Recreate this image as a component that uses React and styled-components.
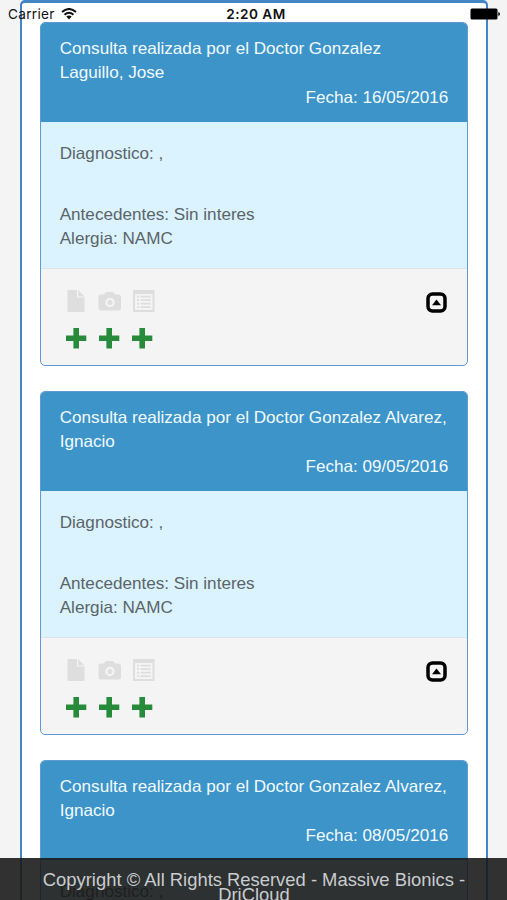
import React from "react";
import styled, { createGlobalStyle } from "styled-components"

const GlobalStyle = createGlobalStyle`
    * {
        box-sizing: border-box;
    }

    body {
        margin: 0;
        background: #f4f4f4;
        font-family: "Liberation Sans", Arial, sans-serif;
    }
`

const Screen = styled.div`
    position: relative;
    height: 900px;
    overflow: hidden;
    padding: 0 19px 0 20px;
`

const StatusBar = styled.div`
    position: absolute;
    top: 6px;
    left: 0;
    right: 0;
    z-index: 2;
    display: grid;
    grid-template-columns: 1fr auto 1fr;
    align-items: center;
    height: 16px;
    padding: 0 7px 0 8px;
    color: #111;
    font-family: Inter, "Liberation Sans", sans-serif;
    font-size: 13.6px;
    line-height: 16px;
`

const Carrier = styled.div`
    display: flex;
    align-items: center;
    gap: 6px;
    letter-spacing: 0.3px;
`

const Clock = styled.div`
    padding-left: 4px;
    font-weight: 600;
    letter-spacing: 0.5px;
`

const Battery = styled.svg`
    justify-self: end;
`

const Panel = styled.div`
    height: 1200px;
    padding: 19px 18px 0;
    border: 2px solid #4286c6;
    border-top-width: 3px;
    border-radius: 5px;
    background: #fff;
`

const Card = styled.div`
    height: 344px;
    margin-bottom: 25px;
    border: 1px solid #609ad3;
    border-radius: 5px;
    overflow: hidden;
    background: #f4f4f4;
    font-size: 17.12px;
    line-height: 24.5px;
`

const CardHeader = styled.div`
    height: 99px;
    padding: 13.6px 18.8px 0 18.7px;
    background: #3c94c9;
    color: #f2fbff;
`

const DateLine = styled.div`
    text-align: right;
`

const CardBody = styled.div`
    height: 147px;
    padding: 19.6px 18.7px 0;
    border-bottom: 1px solid #dde3e6;
    background: #daf3ff;
    color: #5c6468;
`

const Diagnosis = styled.div`
    margin-bottom: 36.5px;
`

const CardFooter = styled.div`
    display: flex;
    justify-content: space-between;
    padding: 21px 20.5px 0 24px;
`

const IconGrid = styled.div`
    display: grid;
    grid-template-columns: repeat(3, 22px);
    column-gap: 11px;
    row-gap: 14.5px;
`

const Icon = styled.svg`
    display: block;
    width: 22px;
    height: 22px;
    overflow: visible;
    color: ${props => props.$color};
`

const Toggle = styled.svg`
    display: block;
    margin-top: 1.7px;
`

const Copyright = styled.div`
    position: absolute;
    left: 0;
    right: 0;
    bottom: 0;
    z-index: 2;
    height: 42px;
    padding: 15px 40px 0 41px;
    overflow: hidden;
    background: rgba(22, 22, 22, 0.88);
    color: #c8cccf;
    font-size: 18.4px;
    line-height: 14.5px;
    text-align: center;
`

const visits = [
    { name: "Gonzalez Laguillo, Jose", date: "16/05/2016" },
    { name: "Gonzalez Alvarez, Ignacio", date: "09/05/2016" },
    { name: "Gonzalez Alvarez, Ignacio", date: "08/05/2016" },
]

const FileIcon = () => (
    <Icon $color="#dedede" viewBox="0 0 22 22">
        <path d="M2.5 0H12V7.5H19.5V22H2.5Z M13.2 0L19.5 6.5H13.2Z" fill="currentColor" />
    </Icon>
)

const CameraIcon = () => (
    <Icon $color="#dedede" viewBox="0 0 22 22">
        <path fillRule="evenodd" d="M2.5 4.5H5.5L8 2H15L17.5 4.5H20.5Q23 4.5 23 7.5V18Q23 20.5 20.5 20.5H2.5Q0.5 20.5 0.5 18V7Q0.5 4.5 2.5 4.5ZM12 7.8A4.7 4.7 0 1 0 12 17.2A4.7 4.7 0 1 0 12 7.8Z" fill="currentColor" />
        <circle cx="12" cy="12.5" r="2.5" fill="currentColor" />
    </Icon>
)

const ListIcon = () => (
    <Icon $color="#dedede" viewBox="0 0 22 22">
        <path fillRule="evenodd" d="M2 0H23.5V22H2ZM4 4V20H21.5V4Z" fill="currentColor" />
        <path d="M6 6.7H8.2M9.7 6.7H19.7M6 10.2H8.2M9.7 10.2H19.7M6 13.7H8.2M9.7 13.7H19.7M6 17.2H8.2M9.7 17.2H19.7" stroke="currentColor" strokeWidth="1.7" />
    </Icon>
)

const PlusIcon = () => (
    <Icon $color="#278b3b" viewBox="0 0 22 22">
        <path d="M8.4 1H14V8.5H21.3V14H14V21.5H8.4V14H1V8.5H8.4Z" fill="currentColor" />
    </Icon>
)

const ToggleIcon = () => (
    <Toggle width="21" height="21" viewBox="0 0 21 21">
        <rect x="2" y="2" width="17" height="17" rx="4.5" fill="none" stroke="#000" strokeWidth="3.5" />
        <path d="M6 13.2L10.5 7.5L15 13.2Z" fill="#000" />
    </Toggle>
)

const VisitCard = ({ name, date }) => (
    <Card>
        <CardHeader>
            <div>Consulta realizada por el Doctor {name}</div>
            <DateLine>Fecha: {date}</DateLine>
        </CardHeader>
        <CardBody>
            <Diagnosis>Diagnostico: ,</Diagnosis>
            <div>Antecedentes: Sin interes</div>
            <div>Alergia: NAMC</div>
        </CardBody>
        <CardFooter>
            <IconGrid>
                <FileIcon />
                <CameraIcon />
                <ListIcon />
                <PlusIcon />
                <PlusIcon />
                <PlusIcon />
            </IconGrid>
            <ToggleIcon />
        </CardFooter>
    </Card>
)

const App = () => (
    <Screen>
        <GlobalStyle />
        <StatusBar>
            <Carrier>
                Carrier
                <svg width="16" height="12" viewBox="0 0 16 12">
                    <path d="M1 4Q8 -2 15 4M3.5 6.7Q8 2.8 12.5 6.7" fill="none" stroke="#111" strokeWidth="2" />
                    <path d="M5.3 8.6Q8 6.4 10.7 8.6L8 11.4Z" fill="#111" />
                </svg>
            </Carrier>
            <Clock>2:20 AM</Clock>
            <Battery width="30" height="12" viewBox="0 0 30 12">
                <rect x="0.5" y="0.5" width="27" height="11" rx="1.5" fill="#000" />
                <path d="M28.3 4Q30 4.5 30 6T28.3 8Z" fill="#000" />
            </Battery>
        </StatusBar>
        <Panel>
            {visits.map(visit => <VisitCard key={visit.date} {...visit} />)}
        </Panel>
        <Copyright>Copyright © All Rights Reserved - Massive Bionics - DriCloud</Copyright>
    </Screen>
)

export default App;
